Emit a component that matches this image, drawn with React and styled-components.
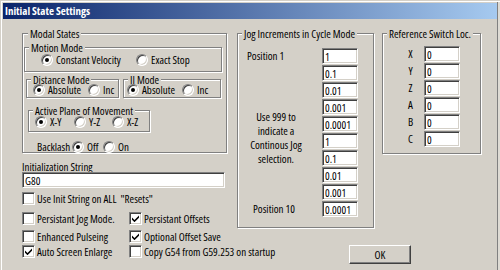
import styled, { createGlobalStyle } from "styled-components";

const GlobalStyle = createGlobalStyle`
  body {
    margin: 0;
    background: #d4d0c8;
    font-family: "Open Sans", "Liberation Sans", Arial, sans-serif;
    font-stretch: 75%;
    font-size: 11px;
    color: #000;
  }
`;

const Window = styled.div`
  width: 500px;
  height: 270px;
  box-sizing: border-box;
  background: #d4d0c8;
  overflow: hidden;
  box-shadow: inset 1px 1px 0 #d4d0c8, inset 2px 2px 0 #ffffff,
    inset -2px 0 0 #dedbd4, inset -3px 0 0 #808080;
`;

const TitleBar = styled.div`
  margin: 3px 3px 0;
  height: 16px;
  line-height: 16px;
  padding-left: 2px;
  color: #fff;
  font-weight: bold;
  font-size: 11px;
  background: linear-gradient(to right, #0a246a, #a6caf0);
`;

const Body = styled.div`
  display: flex;
  padding: 9px 0 0 22px;
`;

const LeftColumn = styled.div`
  width: 205px;
  display: flex;
  flex-direction: column;
`;

const RightColumn = styled.div`
  display: flex;
  flex-direction: column;
  margin-left: 10px;
`;

const Row = styled.div`
  display: flex;
  align-items: flex-start;
  gap: ${(p) => p.$gap || 0}px;
`;

const Group = styled.fieldset`
  margin: ${(p) => p.$m || 0};
  padding: ${(p) => p.$pad || "0"};
  width: ${(p) => p.$w}px;
  min-width: 0;
  box-sizing: border-box;
  border: 1px solid #808080;
  box-shadow: inset 1px 1px 0 #fff, 1px 1px 0 #fff;
`;

const Legend = styled.legend`
  margin-left: 4px;
  padding: 0 2px;
  line-height: 11px;
  background: #d4d0c8;
  white-space: nowrap;
`;

const RadioRow = styled.div`
  display: grid;
  grid-template-columns: ${(p) => p.$cols};
  align-items: center;
  height: 12px;
  margin: ${(p) => p.$m || 0};
  padding-left: ${(p) => p.$indent || 0}px;
  white-space: nowrap;
`;

const Choice = styled.label`
  display: flex;
  align-items: center;
  gap: 3px;
  line-height: 12px;
`;

const Radio = styled.span`
  position: relative;
  width: 12px;
  height: 12px;
  box-sizing: border-box;
  border-radius: 50%;
  background: #fff;
  border: 1px solid;
  border-color: #808080 #fff #fff #808080;
  box-shadow: inset 1px 1px 0 #404040, inset -1px -1px 0 #d4d0c8;
  flex: none;
  &::after {
    content: "";
    display: ${(p) => (p.$on ? "block" : "none")};
    position: absolute;
    left: 3px;
    top: 3px;
    width: 4px;
    height: 4px;
    border-radius: 50%;
    background: #000;
  }
`;

const Box = styled.span`
  width: 13px;
  height: 13px;
  box-sizing: border-box;
  background: #fff;
  border: 1px solid;
  border-color: #808080 #fff #fff #808080;
  box-shadow: inset 1px 1px 0 #404040, inset -1px -1px 0 #d4d0c8;
  display: flex;
  align-items: center;
  justify-content: center;
  flex: none;
`;

const Caption = styled.div`
  line-height: 13px;
  margin-top: ${(p) => p.$mt || 0}px;
  white-space: nowrap;
`;

const Field = styled.input`
  display: block;
  width: ${(p) => p.$w}px;
  height: 16px;
  margin: ${(p) => p.$m || 0};
  box-sizing: border-box;
  padding: 0 2px;
  border: 1px solid;
  border-color: #808080 #fff #fff #808080;
  box-shadow: inset 1px 1px 0 #404040, inset -1px -1px 0 #d4d0c8;
  background: #fff;
  font-family: inherit;
  font-stretch: 75%;
  font-size: 11px;
  color: #000;
  outline: none;
`;

const CheckGrid = styled.div`
  display: grid;
  grid-template-columns: 107px auto;
  margin-top: 4px;
  white-space: nowrap;
`;

const CheckItem = styled.label`
  display: flex;
  align-items: center;
  gap: 2px;
  height: 13px;
  grid-column: ${(p) => (p.$wide ? "1 / span 2" : "auto")};
  margin-top: ${(p) => p.$mt || 0}px;
`;

const StackGrid = styled.div`
  display: grid;
  grid-template-columns: ${(p) => p.$cols};
  grid-auto-rows: 16px;
  row-gap: 1px;
  padding-left: ${(p) => p.$indent || 0}px;
`;

const SideLabel = styled.div`
  grid-column: 1;
  grid-row: ${(p) => p.$row};
  line-height: 16px;
  padding-left: ${(p) => p.$indent || 0}px;
  text-align: ${(p) => (p.$center ? "center" : "left")};
  white-space: nowrap;
`;

const Note = styled.div`
  grid-column: 1;
  grid-row: 4 / span 4;
  align-self: end;
  padding-right: 8px;
  text-align: center;
  line-height: 14px;
`;

const Cell = styled.div`
  grid-column: 2;
  grid-row: ${(p) => p.$row};
`;

const Button = styled.button`
  width: 62px;
  height: 19px;
  margin: 17px 0 0 112px;
  padding: 0;
  box-sizing: border-box;
  background: #d4d0c8;
  border: 1px solid;
  border-color: #fff #404040 #404040 #fff;
  box-shadow: inset -1px -1px 0 #808080, inset 1px 1px 0 #d4d0c8;
  font-family: inherit;
  font-stretch: 75%;
  font-size: 11px;
  color: #000;
`;

function RadioChoice({ on, children }) {
  return (
    <Choice>
      <Radio $on={on} />
      {children}
    </Choice>
  );
}

function Check({ on, children, wide, mt }) {
  return (
    <CheckItem $wide={wide} $mt={mt}>
      <Box>
        {on && (
          <svg width="7" height="7" viewBox="0 0 7 7">
            <path d="M0 2.5 L2.5 5 L7 0.5 L7 2.8 L2.5 7.2 L0 4.8 Z" fill="#000" />
          </svg>
        )}
      </Box>
      {children}
    </CheckItem>
  );
}

const jogValues = ["1", "0.1", "0.01", "0.001", "0.0001", "1", "0.1", "0.01", "0.001", "0.0001"];
const axes = ["X", "Y", "Z", "A", "B", "C"];

export default function App() {
  return (
    <>
      <GlobalStyle />
      <Window>
        <TitleBar>Initial State Settings</TitleBar>
        <Body>
          <LeftColumn>
            <Group $w={205} $pad="3px 4px 1px 1px">
              <Legend>Modal States</Legend>
              <Group $w={198} $pad="0 0 5px 0">
                <Legend>Motion Mode</Legend>
                <RadioRow $cols="95px auto" $indent={16} $m="1px 0 0">
                  <RadioChoice on>Constant Velocity</RadioChoice>
                  <RadioChoice>Exact Stop</RadioChoice>
                </RadioRow>
              </Group>
              <Row $gap={4}>
                <Group $w={93} $m="2px 0 0 2px" $pad="0 0 1px 0">
                  <Legend>Distance Mode</Legend>
                  <RadioRow $cols="55px auto" $indent={6} $m="-1px 0 0">
                    <RadioChoice on>Absolute</RadioChoice>
                    <RadioChoice>Inc</RadioChoice>
                  </RadioRow>
                </Group>
                <Group $w={98} $m="2px 0 0 0" $pad="0 0 1px 0">
                  <Legend>IJ Mode</Legend>
                  <RadioRow $cols="55px auto" $indent={3} $m="-1px 0 0">
                    <RadioChoice on>Absolute</RadioChoice>
                    <RadioChoice>Inc</RadioChoice>
                  </RadioRow>
                </Group>
              </Row>
              <Group $w={122} $m="7px 0 0 4px" $pad="0 0 3px 0">
                <Legend>Active Plane of Movement</Legend>
                <RadioRow $cols="39px 38px auto" $indent={6}>
                  <RadioChoice on>X-Y</RadioChoice>
                  <RadioChoice>Y-Z</RadioChoice>
                  <RadioChoice>X-Z</RadioChoice>
                </RadioRow>
              </Group>
              <RadioRow $cols="35px 31px auto" $indent={13} $m="7px 0 0">
                <span>Backlash</span>
                <RadioChoice on>Off</RadioChoice>
                <RadioChoice>On</RadioChoice>
              </RadioRow>
            </Group>
            <Caption $mt={7}>Initialization String</Caption>
            <Field $w={203} $m="-1px 0 0" defaultValue="G80" readOnly />
            <CheckGrid>
              <Check wide>Use Init String on ALL&nbsp;&nbsp;"Resets"</Check>
              <Check mt={7}>Persistant Jog Mode.</Check>
              <Check on mt={7}>Persistant Offsets</Check>
              <Check mt={5}>Enhanced Pulseing</Check>
              <Check on mt={5}>Optional Offset Save</Check>
              <Check on mt={2}>Auto Screen Enlarge</Check>
              <Check mt={2}>Copy G54 from G59.253 on startup</Check>
            </CheckGrid>
          </LeftColumn>
          <RightColumn>
            <Row $gap={8}>
              <Group $w={137} $pad="9px 0 10px 0">
                <Legend>Jog Increments in Cycle Mode</Legend>
                <StackGrid $cols="84px 36px">
                  <SideLabel $row={1} $indent={9}>Position 1</SideLabel>
                  <Note>
                    Use 999 to
                    <br />
                    indicate a
                    <br />
                    Continous Jog
                    <br />
                    selection.
                  </Note>
                  <SideLabel $row={10} $indent={15}>Position 10</SideLabel>
                  {jogValues.map((v, i) => (
                    <Cell key={i} $row={i + 1}>
                      <Field $w={36} defaultValue={v} readOnly />
                    </Cell>
                  ))}
                </StackGrid>
              </Group>
              <Group $w={99} $pad="7px 0 6px 0">
                <Legend>Reference Switch Loc.</Legend>
                <StackGrid $cols="27px 36px" $indent={14}>
                  {axes.map((a, i) => (
                    <SideLabel key={a} $row={i + 1} $center>
                      {a}
                    </SideLabel>
                  ))}
                  {axes.map((a, i) => (
                    <Cell key={a} $row={i + 1}>
                      <Field $w={36} defaultValue="0" readOnly />
                    </Cell>
                  ))}
                </StackGrid>
              </Group>
            </Row>
            <Button>OK</Button>
          </RightColumn>
        </Body>
      </Window>
    </>
  );
}
